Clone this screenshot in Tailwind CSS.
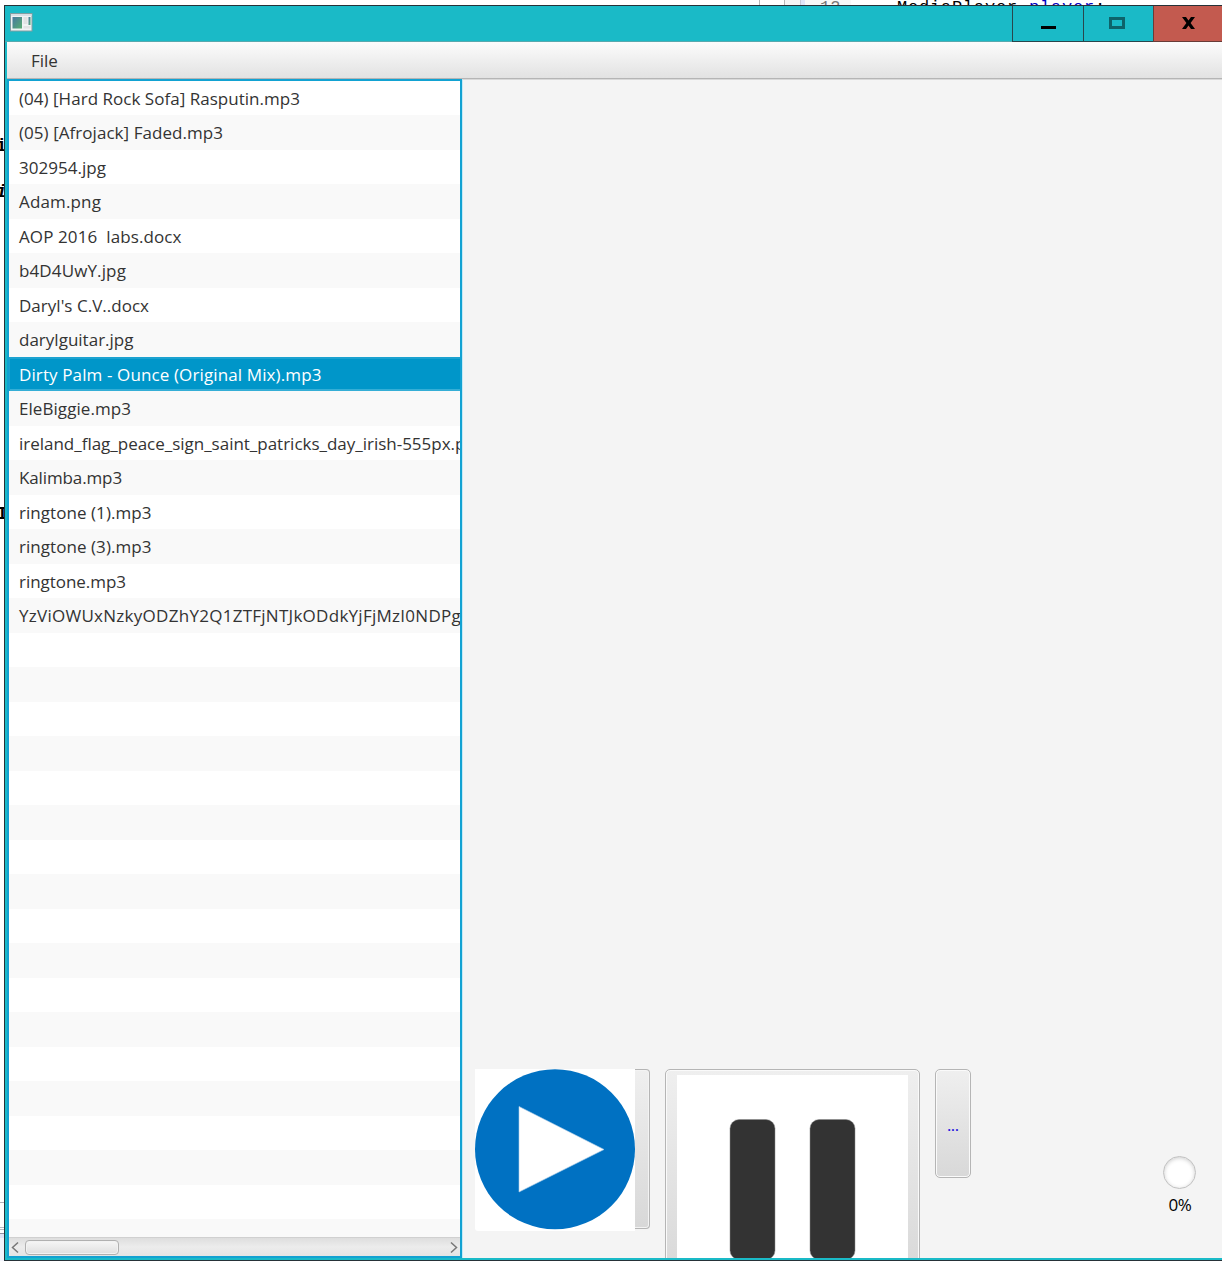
<!DOCTYPE html>
<html lang="en">
<head>
<meta charset="utf-8">
<title>Media Player</title>
<script src="https://cdn.jsdelivr.net/npm/@tailwindcss/browser@4"></script>
</head>
<body class="flex h-[1261px] w-[1222px] flex-col overflow-hidden bg-white font-['Open_Sans',sans-serif]">
  <!-- editor window behind the player -->
  <div class="relative h-[5px] shrink-0 overflow-hidden bg-white font-['Liberation_Mono',monospace] text-[17px] leading-[20px]">
    <div class="flex h-full pl-[759px]"><div class="w-px bg-[#b8b8b8]"></div><div class="ml-6 w-px bg-[#b8b8b8]"></div><div class="w-[15px] bg-[#f5f5f5]"></div><div class="w-px bg-[#c8c8d8]"></div><div class="w-1 bg-[#e0e5f8]"></div><div class="w-[46px] bg-[#f8f8f8]"></div></div>
    <span class="absolute left-[820px] top-[-2px] text-[#787878]">12</span>
    <span class="absolute left-[897px] top-[-2px] whitespace-pre tracking-[0.8px] text-black">MediaPlayer <span class="text-[#0000c0]">player</span>;</span>
  </div>
  <div class="flex min-h-0 flex-1">
    <div class="relative w-1 shrink-0 overflow-hidden bg-white font-['Liberation_Mono',monospace] text-[18px] font-bold leading-5 text-black">
      <span class="absolute -left-1 top-[131px]">i</span>
      <span class="absolute -left-1 top-[177px] italic">i</span>
      <span class="absolute -left-[3px] top-[499px]">I</span>
      <div class="absolute top-[1197px] h-px w-full bg-[#b0b0b8]"></div>
      <div class="absolute top-[1222px] h-[3px] w-full border-y border-[#b8b8c0]"></div>
      <div class="absolute top-[1228px] h-[5px] w-full border-t border-[#9090a0] bg-[#dfe5f7]"></div>
      <div class="absolute top-[1233px] h-6 w-full bg-[#f2f4fc]"></div>
    </div>
    <!-- player window -->
    <div class="flex min-w-0 flex-1 flex-col border-y border-l border-[#263238] bg-[#1abac7]">
      <header class="flex h-9 shrink-0 justify-between border-b border-[#58a9ae]">
        <svg class="ml-[5px] mt-[7px] h-[19px] w-[23px]" viewBox="0 0 23 19">
          <defs><linearGradient id="g" x1="0" y1="0" x2="1" y2="1"><stop offset="0" stop-color="#4978a0"/><stop offset="1" stop-color="#58ad72"/></linearGradient></defs>
          <rect x=".5" y=".5" width="21.500" height="17.500" fill="#f0f3f4" stroke="#809da2"/>
          <rect x="1" y="1" width="20.500" height="2" fill="#d8dfe5"/>
          <rect x="2.500" y="4" width="9.500" height="11.500" fill="url(#g)"/>
          <rect x="13.500" y="4" width="4" height="7" fill="#e0e2e3"/><rect x="18.500" y="4" width="2" height="8" fill="url(#g)"/><rect x="13.500" y="13" width="7" height="2.500" fill="#e2e4e5"/>
        </svg>
        <div class="-mb-px flex h-9">
          <div class="w-[71px] border-b border-l border-[#29464c]"><svg class="h-full w-full" viewBox="0 0 70 35"><path d="M28 20h15v3H28z"/></svg></div>
          <div class="w-[70px] border-b border-l border-[#29464c]"><svg class="h-full w-full" viewBox="0 0 69 35"><path d="M26.5 12.5h13v9h-13z" fill="none" stroke="#0d636a" stroke-width="3"/></svg></div>
          <div class="w-[69px] border-b border-l border-[#693c38] bg-[#c35a4f]"><svg class="h-full w-full" viewBox="0 0 68 35"><path d="M28 11h4l2.5 3.4L37 11h4l-4.4 6 4.4 6h-4l-2.500-3.400L32 23h-4l4.400-6z"/></svg></div>
        </div>
      </header>
      <div class="ml-0.5 flex h-[37px] shrink-0 items-center border-b border-[#b5b5b5] bg-linear-to-b from-[#fcfcfc] to-[#e2e2e2] pl-6 text-[17px] text-[#333]"><span class="mt-[2px]">File</span></div>
      <main class="mb-0.5 ml-0.5 flex min-h-0 flex-1 bg-[#f4f4f4]">
        <section class="flex w-[455px] shrink-0 flex-col overflow-hidden border-x-2 border-b-2 border-t-2 border-[#12a2d2] bg-white">
          <ul id="files" class="-mt-[0.25px] min-h-0 flex-1 overflow-hidden text-[17px] leading-[35.5px] text-[#333]"></ul>
          <div class="flex h-[19px] shrink-0 items-center border-t border-[#d0d0d0] bg-linear-to-b from-[#dedede] via-[#ececec] to-[#e4e4e4] pl-[2px]">
            <svg class="h-[13px] w-[8px]" viewBox="0 0 8 13"><path d="M7 1.500 1.500 6.500 7 11.500" fill="none" stroke="#777" stroke-width="1.500"/></svg>
            <div class="ml-[6px] h-[15px] w-[94px] rounded border border-[#b0b0b0] bg-linear-to-b from-[#f6f6f6] to-[#dfdfdf] shadow-[inset_0_0_0_1px_#f2f2f2]"></div>
            <svg class="ml-auto mr-[2px] h-[13px] w-[8px]" viewBox="0 0 8 13"><path d="m1 1.500 5.500 5L1 11.500" fill="none" stroke="#777" stroke-width="1.500"/></svg>
          </div>
        </section>
        <section class="flex min-w-0 flex-1 items-start overflow-hidden border-l border-t border-l-[#c5e9f5] border-t-[#d9d9d9] pl-3 pt-[989px]">
          <button class="flex h-[160px] w-[175px] shrink-0 rounded border border-[#b5b5b5] border-l-0 bg-linear-to-b from-[#efefef] to-[#d8d8d8] shadow-[inset_0_0_0_1px_#f3f3f3]">
            <svg class="-my-px h-[162px] w-[160px] shrink-0" viewBox="0 0 160 162"><path fill="#fff" d="M0 0h160v162H3q-3 0-3-3z"/><circle cx="80" cy="80.200" r="80" fill="#0071c2"/><path fill="#fff" stroke="#b0cfe8" stroke-width=".6" d="M44 37.500v85.500l85-42.500z"/></svg>
          </button>
          <button class="ml-[15px] flex h-[256px] w-[255px] shrink-0 justify-center rounded-[5px] border border-[#b5b5b5] bg-linear-to-b from-[#efefef] to-[#d3d3d3] pt-[5px] shadow-[inset_0_0_0_1px_#fafafa]">
            <svg class="h-[231px] w-[231px]" viewBox="0 0 231 231"><path fill="#fff" d="M0 0h231v231H0z"/><g fill="#333" stroke="#888" stroke-width=".5"><rect x="53" y="44.500" width="45" height="140" rx="9"/><rect x="133" y="44.500" width="45" height="140" rx="9"/></g></svg>
          </button>
          <button class="ml-[15px] flex h-[109px] w-9 shrink-0 justify-center rounded-[5px] border border-[#b5b5b5] bg-linear-to-b from-[#efefef] to-[#d8d8d8] pt-[46px] text-[14px] font-semibold leading-5 text-[#2010e0] shadow-[inset_0_0_0_1px_#fafafa]">...</button>
          <div class="ml-auto mr-[26px] mt-[87px] flex w-[33px] flex-col items-center">
            <div class="size-[33px] rounded-full border border-[#c0c0c0] bg-white shadow-[inset_0_1px_4px_#ccc]"></div>
            <div class="mt-1 pl-px text-[17px] leading-6 tracking-[-0.5px] text-black">0%</div>
          </div>
        </section>
      </main>
    </div>
  </div>
  <script>
    // file name and its drawn width in px
    const files = [
      ["(04) [Hard Rock Sofa] Rasputin.mp3", 281], ["(05) [Afrojack] Faded.mp3", 204],
      ["302954.jpg", 87], ["Adam.png", 82], ["AOP 2016  labs.docx", 162.5], ["b4D4UwY.jpg", 107],
      ["Daryl's C.V..docx", 130], ["darylguitar.jpg", 114.5], ["Dirty Palm - Ounce (Original Mix).mp3", 302.5],
      ["EleBiggie.mp3", 112], ["ireland_flag_peace_sign_saint_patricks_day_irish-555px.png", 466],
      ["Kalimba.mp3", 103], ["ringtone (1).mp3", 132.5], ["ringtone (3).mp3", 132.5], ["ringtone.mp3", 107],
      ["YzViOWUxNzkyODZhY2Q1ZTFjNTJkODdkYjFjMzI0NDPg", 442]
    ];
    const list = document.getElementById("files");
    const ctx = document.createElement("canvas").getContext("2d");
    ctx.font = '17px "Open Sans"';
    for (let i = 0; i < 34; i++) {
      const li = document.createElement("li");
      li.className = "h-[34.5px] whitespace-pre pl-[10px] " +
        (i === 8 ? "bg-[#0096c9] text-white shadow-[inset_1px_2px_0_#1ca2d0,inset_0_-2px_0_#35aed6]" : i % 2 ? "bg-[#f9f9f9]" : "bg-white");
      list.append(li);
      if (files[i]) {
        const [name, width] = files[i];
        const span = document.createElement("span");
        span.textContent = name;
        span.style.letterSpacing = ((width - ctx.measureText(name).width) / name.length).toFixed(3) + "px";
        li.append(span);
      }
    }
  </script>
</body>
</html>
